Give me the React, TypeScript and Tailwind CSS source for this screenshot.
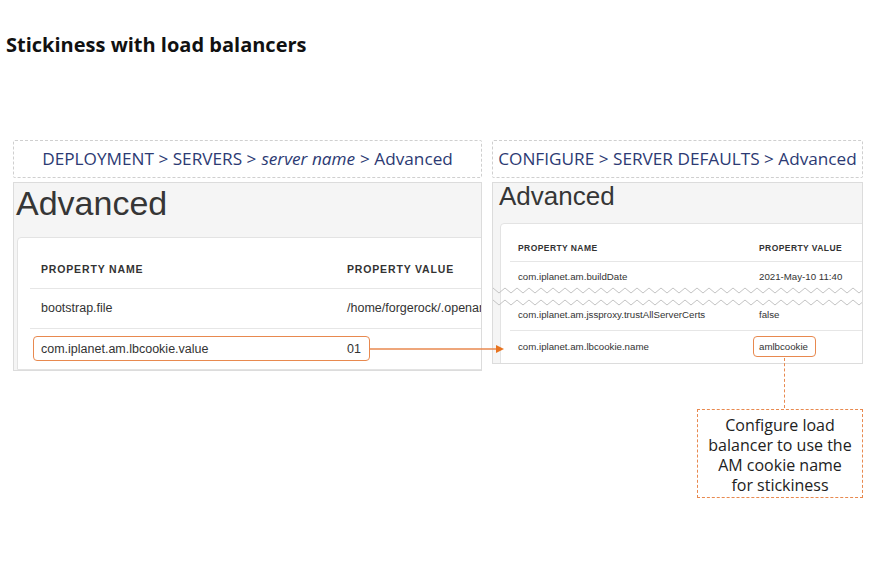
import React from 'react';

const orange = '#e8894f';

function Zigzag() {
    // two torn-edge lines marking skipped rows
    const pts = (y0: number) => {
        const out: string[] = [];
        for (let i = 0; i <= 64; i++) out.push(`${i * 6},${y0 + (i % 2 === 0 ? 0 : 5)}`);
        return out.join(' ');
    };
    return (
        <svg className="absolute left-0 top-[104px]" width="372" height="22" viewBox="0 0 372 22">
            <polyline points={pts(1)} fill="none" stroke="#c4c4c4" strokeWidth="1" />
            <polyline points={pts(13)} fill="none" stroke="#c4c4c4" strokeWidth="1" />
        </svg>
    );
}

function LeftPanel() {
    return (
        <div className="h-[189px] overflow-hidden border border-[#dcdcdc] bg-[#f5f5f5] font-['Liberation_Sans',Arial,sans-serif] text-[#333]">
            <div className="mt-[3px] pl-[2px] text-[34px] leading-none text-[#363636]">Advanced</div>
            <div className="mt-[17px] ml-[3px] w-[560px] rounded-tl-[4px] border border-[#e3e3e3] bg-white pl-[12px] pt-[24px]">
                <div className="flex border-b border-[#e6e6e6] pb-[12px] text-[10.5px] font-bold leading-[14px] tracking-[0.08em] text-[#333]">
                    <div className="w-[317px] pl-[11px]">PROPERTY NAME</div>
                    <div>PROPERTY VALUE</div>
                </div>
                <div className="flex h-[40px] items-center border-b border-[#e6e6e6] text-[12.5px]">
                    <div className="w-[317px] pl-[11px]">bootstrap.file</div>
                    <div>/home/forgerock/.openam</div>
                </div>
                <div className="relative flex h-[40px] items-center text-[12.5px]">
                    <div className="w-[317px] pl-[11px]">com.iplanet.am.lbcookie.value</div>
                    <div>01</div>
                    <div className="absolute left-[3px] top-[7px] h-[25px] w-[337px] rounded-[4px] border-[1.5px] border-[#e8894f]" />
                </div>
            </div>
        </div>
    );
}

function RightPanel() {
    return (
        <div className="relative h-[182px] overflow-hidden border border-[#dcdcdc] bg-[#f5f5f5] font-['Liberation_Sans',Arial,sans-serif] text-[#333]">
            <div className="pl-[6px] text-[26px] leading-none text-[#363636]">Advanced</div>
            <div className="mt-[14px] ml-[7px] w-[420px] rounded-tl-[4px] border border-[#e3e3e3] bg-white pl-[9px] pt-[18px]">
                <div className="flex border-b border-[#e6e6e6] pb-[7px] text-[8.5px] font-bold leading-[12px] tracking-[0.05em] text-[#333]">
                    <div className="w-[249px] pl-[8px]">PROPERTY NAME</div>
                    <div>PROPERTY VALUE</div>
                </div>
                <div className="flex h-[26px] items-center pt-[4px] text-[9.7px]">
                    <div className="w-[249px] pl-[8px]">com.iplanet.am.buildDate</div>
                    <div>2021-May-10 11:40</div>
                </div>
                <div className="h-[18px]" />
                <div className="flex h-[25px] items-center border-b border-[#e6e6e6] pb-[5px] text-[9.7px]">
                    <div className="w-[249px] pl-[8px]">com.iplanet.am.jssproxy.trustAllServerCerts</div>
                    <div>false</div>
                </div>
                <div className="relative flex h-[32px] items-center text-[9.7px]">
                    <div className="w-[249px] pl-[8px]">com.iplanet.am.lbcookie.name</div>
                    <div>amlbcookie</div>
                    <div className="absolute left-[243px] top-[5px] h-[21px] w-[63px] rounded-[4px] border-[1.5px] border-[#e8894f]" />
                </div>
            </div>
            <Zigzag />
        </div>
    );
}

function Crumb({ children }: { children: React.ReactNode }) {
    return (
        <div className="flex h-[38px] items-center justify-center rounded-[2px] border border-dashed border-[#cfcfcf] text-[17.2px] text-[#2c3a73]">
            {children}
        </div>
    );
}

export default function App() {
    return (
        <div className="relative h-[565px] w-[870px] overflow-hidden bg-white font-['Open_Sans',sans-serif]">
            <h1 className="pl-[6px] pt-[32px] text-[20px] font-bold leading-[26px] text-[#111]">Stickiness with load balancers</h1>

            <div className="mt-[82px] flex gap-[10px] pl-[13px]">
                <div className="flex w-[469px] flex-col gap-[4px]">
                    <Crumb>
                        DEPLOYMENT &gt; SERVERS &gt; <i className="mx-[5px]">server name</i> &gt; Advanced
                    </Crumb>
                    <LeftPanel />
                </div>
                <div className="flex w-[371px] flex-col">
                    <Crumb>CONFIGURE &gt; SERVER DEFAULTS &gt; Advanced</Crumb>
                    <div className="mt-[4px]">
                        <RightPanel />
                    </div>
                    <div className="mt-[45px] w-[166px] self-end border border-dashed border-[#e8894f] pb-[2px] pt-[5px] text-center text-[16px] leading-[20px] text-[#222]">
                        Configure load
                        <br />
                        balancer to use the
                        <br />
                        AM cookie name
                        <br />
                        for stickiness
                    </div>
                </div>
            </div>

            {/* arrow from the left row to the right row */}
            <svg className="absolute left-[370px] top-[344px]" width="136" height="10" viewBox="0 0 136 10">
                <line x1="0" y1="5" x2="128" y2="5" stroke={orange} strokeWidth="1.5" />
                <polygon points="126,1 134,5 126,9" fill="#e8731f" />
            </svg>

            {/* dashed connector down to the callout */}
            <div className="absolute left-[784px] top-[358px] h-[50px] w-0 border-l-[1.5px] border-dashed border-[#e8894f]" />
        </div>
    );
}
